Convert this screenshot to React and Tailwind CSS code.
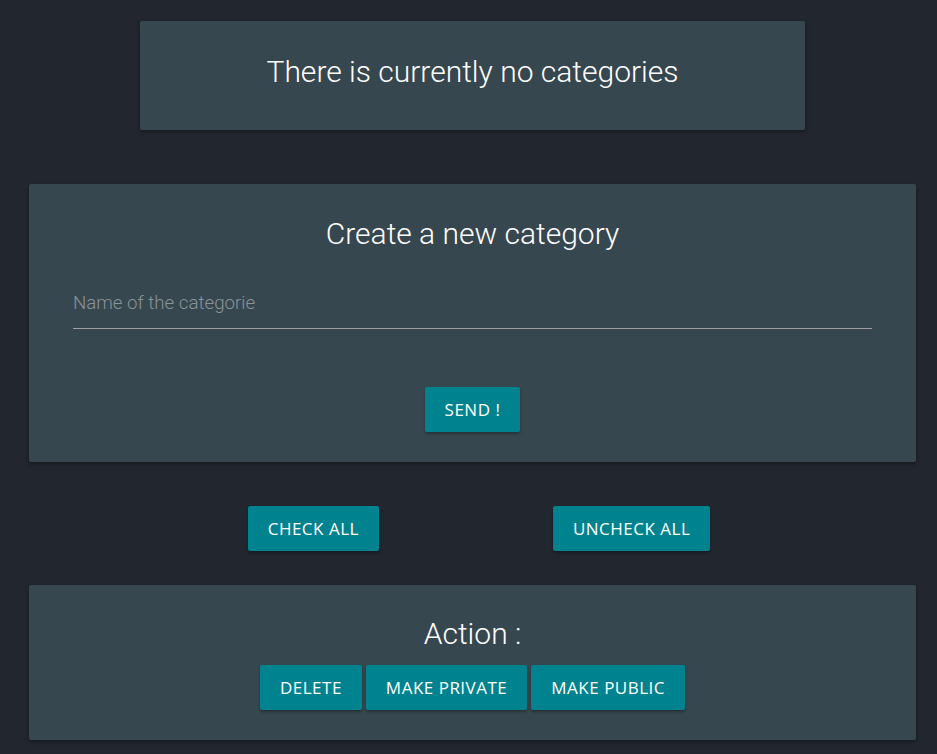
import React, { useState } from 'react';

const btn =
  "bg-[#00838f] text-white rounded-[2px] shadow-[0_2px_3px_rgba(0,0,0,0.3)] uppercase text-[17px] font-['Open_Sans',sans-serif] tracking-[0.5px] h-[45px] px-[20px] hover:bg-[#0097a7]";

export default function App() {
  const [name, setName] = useState('');

  return (
    <div className="min-h-[754px] bg-[#22262e] font-['Roboto',sans-serif] pt-[21px] pb-[14px]">
      <div className="ml-[29px] w-[887px]">
        {/* Empty state */}
        <div className="mx-[111px] h-[109px] pb-[8px] bg-[#37474f] rounded-[2px] shadow-[0_2px_4px_rgba(0,0,0,0.35)] flex items-center justify-center">
          <h4 className="text-[30px] font-light text-white">There is currently no categories</h4>
        </div>

        {/* Create form */}
        <div className="mt-[54px] h-[278px] bg-[#37474f] rounded-[2px] shadow-[0_2px_4px_rgba(0,0,0,0.35)] px-[44px] pt-[30px] flex flex-col items-center">
          <h4 className="text-[30px] font-light text-white leading-[40px]">Create a new category</h4>
          <input
            type="text"
            value={name}
            onChange={(e) => setName(e.target.value)}
            placeholder="Name of the categorie"
            className="mt-[24px] w-full h-[51px] bg-transparent border-b border-[#9e9e9e] text-[18.7px] font-light text-white placeholder-[#8a9397] outline-none"
          />
          <button type="button" className={`${btn} mt-[58px]`}>
            Send !
          </button>
        </div>

        {/* Check buttons */}
        <div className="mt-[44px] flex justify-center gap-[174px] pl-[13px]">
          <button type="button" className={btn}>Check all</button>
          <button type="button" className={btn}>Uncheck all</button>
        </div>

        {/* Actions */}
        <div className="mt-[34px] h-[155px] bg-[#37474f] rounded-[2px] shadow-[0_2px_4px_rgba(0,0,0,0.35)] pt-[29px] flex flex-col items-center">
          <h4 className="text-[30px] font-light text-white leading-[40px]">Action :</h4>
          <div className="mt-[11px] flex gap-[4px]">
            <button type="button" className={btn}>Delete</button>
            <button type="button" className={btn}>Make private</button>
            <button type="button" className={btn}>Make public</button>
          </div>
        </div>
      </div>
    </div>
  );
}
